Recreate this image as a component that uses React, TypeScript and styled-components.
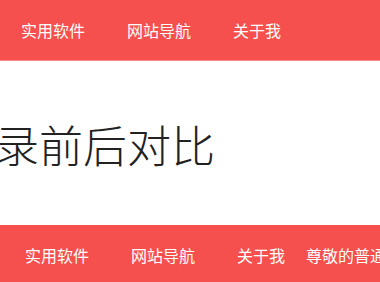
import React from "react";
import styled, { createGlobalStyle } from "styled-components";

const Global = createGlobalStyle`
  html, body { margin: 0; padding: 0; background: #ffffff; overflow: hidden; }
  body { font-family: "Noto Sans CJK SC", "Noto Sans", sans-serif; }
`;

const Page = styled.div`
  width: 380px;
  height: 282px;
  overflow: hidden;
  display: flex;
  flex-direction: column;
`;

const NavBar = styled.nav<{ $offset: number; $border?: boolean }>`
  flex: none;
  height: 60px;
  background: #f5504d;
  display: flex;
  align-items: center;
  padding-left: ${(p) => p.$offset}px;
  white-space: nowrap;
  overflow: hidden;
  border-bottom: ${(p) => (p.$border ? "1px solid #f98a86" : "none")};
`;

const NavItem = styled.a<{ $pad?: number }>`
  color: #ffffff;
  font-size: 16px;
  line-height: 60px;
  padding: 0 ${(p) => p.$pad ?? 21}px;
  text-decoration: none;
  flex: none;
`;

const Main = styled.section`
  flex: none;
  height: 164px;
  display: flex;
  align-items: center;
  overflow: hidden;
`;

const Heading = styled.h1`
  margin: 2px 0 0 -5px;
  font-size: 44px;
  font-weight: 300;
  color: #222222;
  white-space: nowrap;
  line-height: 1;
`;

export default function App() {
  return (
    <Page>
      <Global />
      <NavBar $offset={0} $border>
        <NavItem>实用软件</NavItem>
        <NavItem>网站导航</NavItem>
        <NavItem>关于我</NavItem>
      </NavBar>
      <Main>
        <Heading>录前后对比</Heading>
      </Main>
      <NavBar $offset={4}>
        <NavItem>实用软件</NavItem>
        <NavItem>网站导航</NavItem>
        <NavItem>关于我</NavItem>
        <NavItem $pad={0}>尊敬的普通用户</NavItem>
      </NavBar>
    </Page>
  );
}
